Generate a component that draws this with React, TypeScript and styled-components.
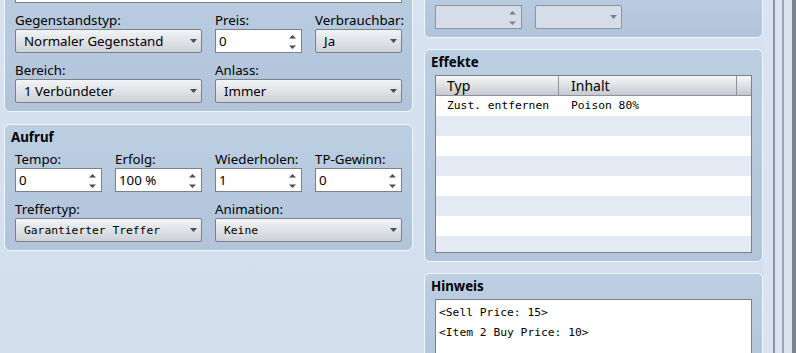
import React from 'react'
import styled, { createGlobalStyle } from 'styled-components'

const GlobalStyle = createGlobalStyle`
  html, body {
    margin: 0;
    padding: 0;
  }
  body {
    font-family: "Noto Sans", "DejaVu Sans", sans-serif;
    font-size: 13.3px;
    color: #000;
  }
`

const MONO = `"DejaVu Sans Mono", "Liberation Mono", monospace`

const Screen = styled.div`
  display: flex;
  width: 796px;
  height: 353px;
  overflow: hidden;
  box-sizing: border-box;
  padding-left: 4px;
  background: linear-gradient(#d7e3f0, #d2deeb);
`

const Column = styled.div<{ $width: number; $top: number; $gap: number; $left?: number }>`
  display: flex;
  flex-direction: column;
  flex-shrink: 0;
  gap: ${p => p.$gap}px;
  width: ${p => p.$width}px;
  margin-top: ${p => p.$top}px;
  margin-left: ${p => p.$left ?? 0}px;
`

const Panel = styled.section`
  box-sizing: border-box;
  border: 1px solid #f1f6fb;
  border-radius: 6px;
  background: linear-gradient(#bccee2, #b1c4da);
  padding: 3px 10px 8px;
`

const PanelTitle = styled.h3`
  margin: 0 0 4px -4px;
  font-size: 13.3px;
  font-weight: 700;
  line-height: 18px;
`

const FieldGrid = styled.div<{ $top?: number }>`
  display: grid;
  grid-template-columns: repeat(4, 87px);
  column-gap: 13px;
  row-gap: 8px;
  margin-top: ${p => p.$top ?? 0}px;
`

const Field = styled.div<{ $span?: number }>`
  display: flex;
  flex-direction: column;
  grid-column: span ${p => p.$span ?? 1};
`

const Label = styled.label<{ $gap?: number }>`
  height: 18px;
  line-height: 18px;
  margin-bottom: ${p => p.$gap ?? 0}px;
  white-space: nowrap;
`

const DescBox = styled.div`
  box-sizing: border-box;
  height: 44px;
  border: 1px solid #7b8187;
  background: #fff;
  margin-bottom: 8px;
`

const Select = styled.div<{ $mono?: boolean; $disabled?: boolean }>`
  box-sizing: border-box;
  height: 24px;
  display: flex;
  align-items: center;
  justify-content: space-between;
  padding: 0 4px 0 8px;
  border: 1px solid ${p => (p.$disabled ? '#8c949c' : '#7b8187')};
  border-radius: 2px;
  background: ${p => (p.$disabled ? '#d5dee8' : 'linear-gradient(#f2f4f6, #cdd2d8)')};
  font-family: ${p => (p.$mono ? MONO : 'inherit')};
  font-size: ${p => (p.$mono ? '11.3px' : 'inherit')};
  white-space: nowrap;
`

const Spin = styled.div<{ $disabled?: boolean }>`
  box-sizing: border-box;
  height: 24px;
  display: flex;
  align-items: center;
  padding: 0 5px 0 3px;
  border: 1px solid ${p => (p.$disabled ? '#8c949c' : '#7b8187')};
  background: ${p => (p.$disabled ? '#d5dee8' : '#fff')};
`

const SpinValue = styled.span`
  flex: 1;
`

const ArrowSvg = styled.svg`
  flex-shrink: 0;
`

const SpinSvg = styled.svg`
  flex-shrink: 0;
  margin-top: 2px;
`

const DropArrow = ({ dim }: { dim?: boolean }) => (
  <ArrowSvg width="7" height="4" viewBox="0 0 7 4">
    <polygon points="0,0 7,0 3.5,4" fill={dim ? '#7a8188' : '#4a4f54'} />
  </ArrowSvg>
)

const SpinArrows = ({ dim }: { dim?: boolean }) => (
  <SpinSvg width="7" height="14" viewBox="0 0 7 14">
    <polygon points="0,3.5 3.5,0 7,3.5" fill={dim ? '#7a8188' : '#4a4f54'} />
    <polygon points="0,10.5 7,10.5 3.5,14" fill={dim ? '#7a8188' : '#4a4f54'} />
  </SpinSvg>
)

const Table = styled.div`
  box-sizing: border-box;
  height: 178px;
  border: 1px solid #7b8187;
  background: #fff;
  overflow: hidden;
`

const TableRow = styled.div<{ $head?: boolean; $alt?: boolean }>`
  display: grid;
  grid-template-columns: 123px 178px 1fr;
  box-sizing: border-box;
  height: 20px;
  background: ${p =>
    p.$head ? 'linear-gradient(#f6f7f8, #c5cad0)' : p.$alt ? '#e3eaf3' : '#fff'};
  border-bottom: ${p => (p.$head ? '1px solid #8c939a' : 'none')};
`

const Cell = styled.div<{ $head?: boolean; $pad: number; $last?: boolean }>`
  padding-left: ${p => p.$pad}px;
  border-right: ${p => (p.$head && !p.$last ? '1px solid #8c939a' : 'none')};
  font-family: ${p => (p.$head ? 'inherit' : MONO)};
  font-size: ${p => (p.$head ? '14px' : '11.3px')};
  line-height: ${p => (p.$head ? '19px' : '20px')};
  white-space: nowrap;
`

const NoteBox = styled.div`
  box-sizing: border-box;
  height: 80px;
  border: 1px solid #7b8187;
  background: #fff;
  padding: 3px 3px;
  font-family: ${MONO};
  font-size: 11.3px;
  line-height: 20px;
  white-space: pre;
`

const Splitter = styled.div`
  display: flex;
  flex-shrink: 0;
  width: 33px;
  height: 100%;
`

const Strip = styled.div<{ $w: number; $c: string }>`
  width: ${p => p.$w}px;
  background: ${p => p.$c};
`

const effects = [
  { type: 'Zust. entfernen', content: 'Poison 80%' },
  { type: '', content: '' },
  { type: '', content: '' },
  { type: '', content: '' },
  { type: '', content: '' },
  { type: '', content: '' },
  { type: '', content: '' },
  { type: '', content: '' },
]

const App = () => {
  return (
    <>
      <GlobalStyle />
      <Screen>
        <Column $width={409} $top={-45} $gap={12}>
          <Panel>
            <DescBox />
            <FieldGrid>
              <Field $span={2}>
                <Label>Gegenstandstyp:</Label>
                <Select>
                  Normaler Gegenstand
                  <DropArrow />
                </Select>
              </Field>
              <Field>
                <Label>Preis:</Label>
                <Spin>
                  <SpinValue>0</SpinValue>
                  <SpinArrows />
                </Spin>
              </Field>
              <Field>
                <Label>Verbrauchbar:</Label>
                <Select>
                  Ja
                  <DropArrow />
                </Select>
              </Field>
              <Field $span={2}>
                <Label>Bereich:</Label>
                <Select>
                  1 Verbündeter
                  <DropArrow />
                </Select>
              </Field>
              <Field $span={2}>
                <Label>Anlass:</Label>
                <Select>
                  Immer
                  <DropArrow />
                </Select>
              </Field>
            </FieldGrid>
          </Panel>

          <Panel>
            <PanelTitle>Aufruf</PanelTitle>
            <FieldGrid $top={2}>
              <Field>
                <Label>Tempo:</Label>
                <Spin>
                  <SpinValue>0</SpinValue>
                  <SpinArrows />
                </Spin>
              </Field>
              <Field>
                <Label>Erfolg:</Label>
                <Spin>
                  <SpinValue>100 %</SpinValue>
                  <SpinArrows />
                </Spin>
              </Field>
              <Field>
                <Label>Wiederholen:</Label>
                <Spin>
                  <SpinValue>1</SpinValue>
                  <SpinArrows />
                </Spin>
              </Field>
              <Field>
                <Label>TP-Gewinn:</Label>
                <Spin>
                  <SpinValue>0</SpinValue>
                  <SpinArrows />
                </Spin>
              </Field>
              <Field $span={2}>
                <Label>Treffertyp:</Label>
                <Select $mono>
                  Garantierter Treffer
                  <DropArrow />
                </Select>
              </Field>
              <Field $span={2}>
                <Label>Animation:</Label>
                <Select $mono>
                  Keine
                  <DropArrow />
                </Select>
              </Field>
            </FieldGrid>
          </Panel>
        </Column>

        <Column $width={339} $top={-21} $gap={11} $left={11}>
          <Panel>
            <FieldGrid>
              <Field>
                <Label $gap={4}>Abweichung:</Label>
                <Spin $disabled>
                  <SpinValue />
                  <SpinArrows dim />
                </Spin>
              </Field>
              <Field>
                <Label $gap={4}>Kritische Treffer:</Label>
                <Select $disabled>
                  <span />
                  <DropArrow dim />
                </Select>
              </Field>
            </FieldGrid>
          </Panel>

          <Panel>
            <PanelTitle>Effekte</PanelTitle>
            <Table>
              <TableRow $head>
                <Cell $head $pad={11}>Typ</Cell>
                <Cell $head $pad={12}>Inhalt</Cell>
                <Cell $head $pad={0} $last />
              </TableRow>
              {effects.map((e, i) => (
                <TableRow key={i} $alt={i % 2 === 1}>
                  <Cell $pad={11}>{e.type}</Cell>
                  <Cell $pad={12}>{e.content}</Cell>
                  <Cell $pad={0} />
                </TableRow>
              ))}
            </Table>
          </Panel>

          <Panel>
            <PanelTitle>Hinweis</PanelTitle>
            <NoteBox>{'<Sell Price: 15>\n<Item 2 Buy Price: 10>'}</NoteBox>
          </Panel>
        </Column>

        <Splitter>
          <Strip $w={10} $c="#d9e4f0" />
          <Strip $w={2} $c="#8d949c" />
          <Strip $w={7} $c="#d9e4f0" />
          <Strip $w={2} $c="#9ba3ac" />
          <Strip $w={8} $c="#d9e4f0" />
          <Strip $w={4} $c="#7b838c" />
        </Splitter>
      </Screen>
    </>
  )
}

export default App
